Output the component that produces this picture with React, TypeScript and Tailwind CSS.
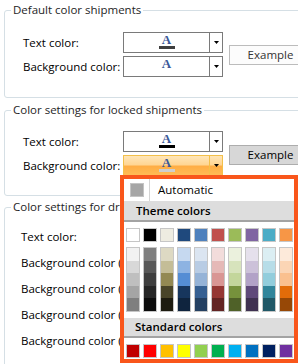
import React from 'react'

const themeTop = ['#ffffff', '#000000', '#eeece1', '#1f497d', '#4f81bd', '#c0504d', '#9bbb59', '#8064a2', '#4bacc6', '#f79646']

const themeShades = [
  ['#f2f2f2', '#d8d8d8', '#bfbfbf', '#a5a5a5', '#7f7f7f'],
  ['#7f7f7f', '#595959', '#3f3f3f', '#262626', '#0c0c0c'],
  ['#ddd9c3', '#c4bd97', '#938953', '#494429', '#1d1b10'],
  ['#c6d9f0', '#8db3e2', '#548dd4', '#17365d', '#0f243e'],
  ['#dbe5f1', '#b8cce4', '#95b3d7', '#366092', '#244061'],
  ['#f2dcdb', '#e5b9b7', '#d99694', '#953734', '#632423'],
  ['#ebf1dd', '#d7e3bc', '#c3d69b', '#76923c', '#4f6128'],
  ['#e5e0ec', '#ccc1d9', '#b2a2c7', '#5f497a', '#3f3151'],
  ['#dbeef3', '#b7dde8', '#92cddc', '#31859b', '#205867'],
  ['#fdeada', '#fbd5b5', '#fac08f', '#e36c09', '#974806'],
]

const standard = ['#c00000', '#ff0000', '#ffc000', '#ffff00', '#92d050', '#00b050', '#00b0f0', '#0070c0', '#002060', '#7030a0']

function Arrow() {
  return (
    <svg width="5" height="3" viewBox="0 0 5 3">
      <polygon points="0,0 5,0 2.5,3" fill="#000" />
    </svg>
  )
}

function ColorCombo({ bar, active }: { bar?: string; active?: boolean }) {
  const box = active
    ? 'border-[#f3c04a] bg-[linear-gradient(to_bottom,#ffe6b8_0%,#ffd694_45%,#ffae45_55%,#ffbb55_100%)]'
    : 'border-[#7a7a7a] bg-white'
  return (
    <div className={`flex h-[21px] w-[100px] border ${box}`}>
      <div className="flex flex-1 flex-col items-center">
        <span
          className="text-[13px] font-bold leading-none text-[#3a5898]"
          style={{ fontFamily: '"Liberation Serif", serif' }}
        >
          A
        </span>
        {bar && <div className="h-[3px] w-[16px]" style={{ backgroundColor: bar }} />}
      </div>
      <div className={`flex w-[13px] items-center justify-center border-l ${active ? 'border-[#f3c04a]' : 'border-[#7a7a7a]'}`}>
        <Arrow />
      </div>
    </div>
  )
}

function Row({ label, children }: { label: string; children?: React.ReactNode }) {
  return (
    <div className="flex h-[21px] items-center">
      <div className="w-[100px] whitespace-nowrap">{label}</div>
      {children}
    </div>
  )
}

function Swatch({ color }: { color: string }) {
  return <div className="h-[14px] w-[14px] border border-[#c6c6c6]" style={{ backgroundColor: color }} />
}

export default function App() {
  return (
    <div
      className="relative h-[364px] w-[298px] overflow-hidden bg-white text-[11.5px] text-black"
      style={{ fontFamily: '"Open Sans", "Noto Sans", sans-serif' }}
    >
      <div className="flex flex-col pl-[4px] pt-[2px]">
        {/* Default */}
        <fieldset className="w-[340px] rounded-[3px] border border-[#d5dfe5] pb-[20px] pl-[18px]">
          <legend className="ml-[-12px] px-[2px] leading-[16px] text-[#1e1e1e]">Default color shipments</legend>
          <div className="flex items-center pt-[14px]">
            <div className="flex flex-col gap-[3px]">
              <Row label="Text color:">
                <ColorCombo bar="#3f3f3f" />
              </Row>
              <Row label="Background color:">
                <ColorCombo />
              </Row>
            </div>
            <button className="ml-[6px] h-[20px] w-[80px] border border-[#bcbcbc] bg-[#fcfcfc] pl-[3px] text-[#333]">Example</button>
          </div>
        </fieldset>

        {/* Locked */}
        <fieldset className="mt-[4px] w-[340px] rounded-[3px] border border-[#d5dfe5] pb-[19px] pl-[18px]">
          <legend className="ml-[-12px] px-[2px] leading-[16px] text-[#1e1e1e]">Color settings for locked shipments</legend>
          <div className="flex items-center pt-[13px]">
            <div className="flex flex-col gap-[3px]">
              <Row label="Text color:">
                <ColorCombo bar="#000000" />
              </Row>
              <Row label="Background color:">
                <ColorCombo bar="#cfcfcf" active />
              </Row>
            </div>
            <button className="ml-[6px] mt-[2px] h-[20px] w-[80px] border border-[#adadad] bg-[#d7d7d7] pl-[3px]">Example</button>
          </div>
        </fieldset>

        {/* Drivers */}
        <fieldset className="mt-[3px] w-[340px] rounded-[3px] border border-[#d5dfe5] pb-[20px] pl-[16px]">
          <legend className="ml-[-10px] px-[2px] leading-[16px] text-[#1e1e1e]">Color settings for drivers</legend>
          <div className="flex flex-col gap-[5px] pt-[11px]">
            <Row label="Text color:" />
            <Row label="Background color (level 1):" />
            <Row label="Background color (level 2):" />
            <Row label="Background color (level 3):" />
            <Row label="Background color (level 4):" />
          </div>
        </fieldset>
      </div>

      {/* Color picker popup */}
      <div className="absolute left-[120px] top-[175px] h-[188px] w-[178px] overflow-hidden border-4 border-[#f9561b] bg-white">
        <div className="flex h-[22px] items-center">
          <div className="ml-[6px] h-[14px] w-[14px] border border-[#c4c4c4] bg-[#a6a6a6]" />
          <div className="ml-[5px] h-full w-px bg-[#d4d4d4]" />
          <span className="ml-[8px]">Automatic</span>
        </div>
        <div className="flex h-[21px] items-center border-b-2 border-[#a3a3a3] bg-[#dddddd] pl-[12px] font-semibold">
          Theme colors
        </div>
        <div className="mt-[6px] flex gap-[3px] pl-[2px]">
          {themeTop.map((c) => (
            <Swatch key={c} color={c} />
          ))}
        </div>
        <div className="mt-[5px] flex gap-[3px] pl-[2px]">
          {themeShades.map((col, i) => (
            <div key={i} className="flex h-[65px] w-[14px] flex-col border border-[#c6c6c6]">
              {col.map((c) => (
                <div key={c} className="flex-1" style={{ backgroundColor: c }} />
              ))}
            </div>
          ))}
        </div>
        <div className="mt-[6px] flex h-[20px] items-center border-b-2 border-[#a3a3a3] bg-[#dddddd] pl-[11px] font-semibold">
          Standard colors
        </div>
        <div className="mt-[6px] flex gap-[3px] pl-[2px]">
          {standard.map((c) => (
            <Swatch key={c} color={c} />
          ))}
        </div>
      </div>
    </div>
  )
}
